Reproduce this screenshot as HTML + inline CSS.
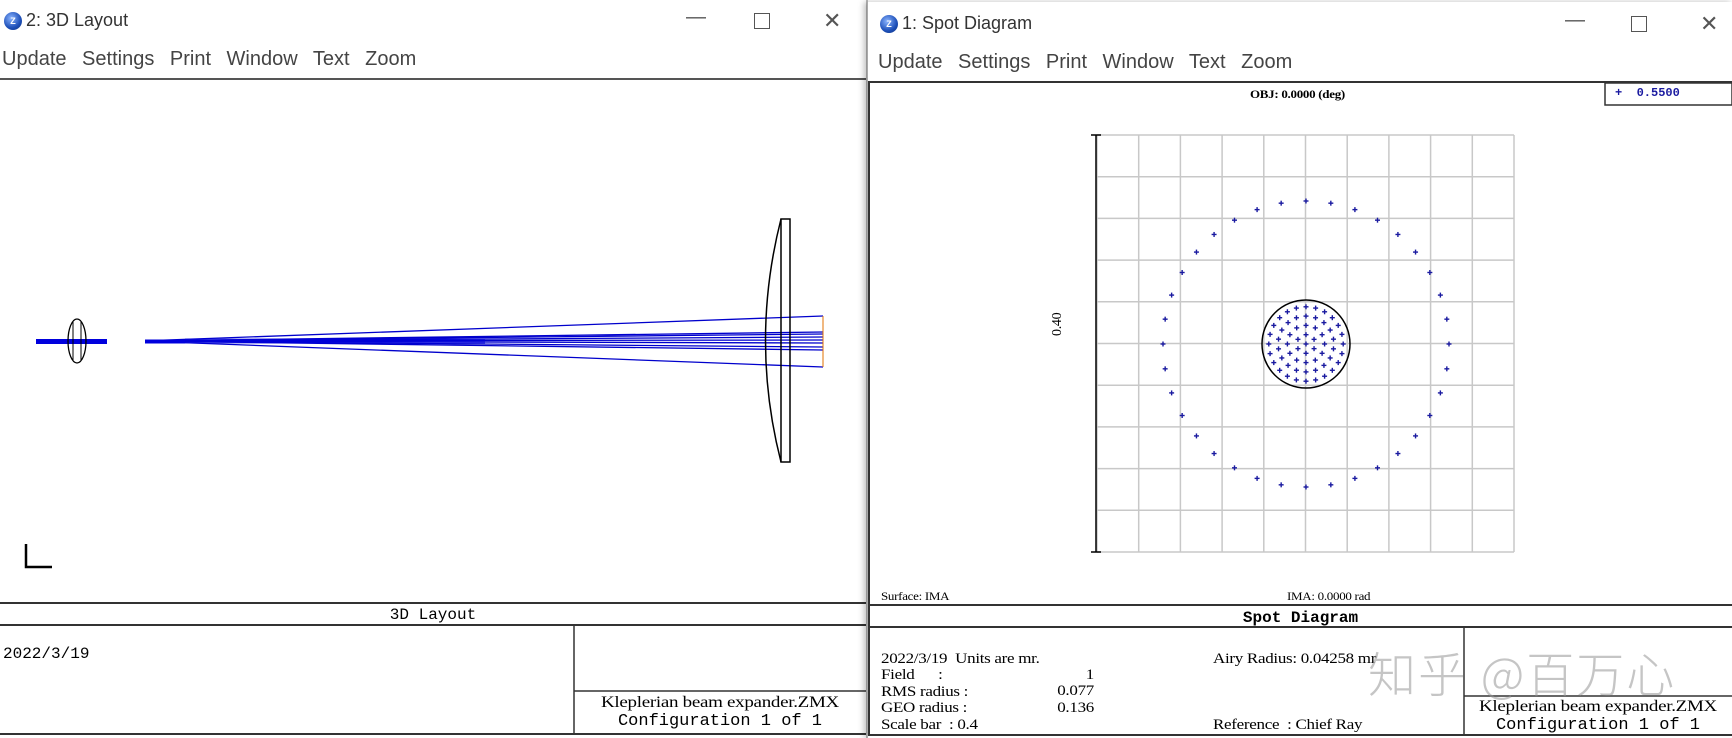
<!DOCTYPE html>
<html><head><meta charset="utf-8"><style>
body{margin:0;width:1732px;height:738px;position:relative;background:#fff;overflow:hidden;font-family:"Liberation Sans",sans-serif}
.a{position:absolute}
.title{font-size:18px;color:#333}
.menu{font-size:20px;color:#444;word-spacing:10px}
.mono{font-family:"Liberation Mono",monospace;color:#000}
.ser{font-family:"Liberation Serif",serif;color:#000;font-size:17px;letter-spacing:-0.3px;white-space:pre;line-height:19.4px;transform:scaleY(0.85);transform-origin:0 0}
.icon{width:18px;height:18px;border-radius:50%;background:radial-gradient(circle at 40% 35%,#8ab4ff,#1d4fb8 60%,#0c2f7a);color:#fff;font-size:9px;font-weight:bold;text-align:center;line-height:18px}
.ctl{font-size:20px;color:#555}
</style></head><body>
<!-- left window -->
<div class="a" style="left:0;top:0;width:866px;height:738px;background:#fff;border-right:2px solid #bbb"></div>
<div class="a icon" style="left:4px;top:12px">Z</div>
<div class="a title" style="left:26px;top:10px">2: 3D Layout</div>
<div class="a ctl" style="left:686px;top:6px">—</div>
<div class="a" style="left:754px;top:13px;width:14px;height:14px;border:1.5px solid #555"></div>
<div class="a ctl" style="left:823px;top:8px;font-size:22px">✕</div>
<div class="a menu" style="left:2px;top:48px">Update Settings Print Window Text Zoom</div>
<div class="a" style="left:0;top:78px;width:866px;height:2px;background:#555"></div>
<svg class="a" style="left:0;top:0" width="866" height="738">
<g stroke="#0000cc" stroke-width="1.3" fill="none" id="rays"></g>
<rect x="36" y="339" width="71" height="5" fill="#0000dd"/>
<rect x="145" y="339.5" width="40" height="4" fill="#0000dd"/>
<rect x="185" y="338.5" width="300" height="5" fill="#0000dd" opacity="0.6"/>
<ellipse cx="77" cy="341" rx="9" ry="22" fill="none" stroke="#000" stroke-width="1.3"/>
<line x1="73" y1="322" x2="73" y2="360" stroke="#000"/><line x1="81" y1="322" x2="81" y2="360" stroke="#000"/>
<path d="M781 219 Q750 341 781 462" fill="none" stroke="#000" stroke-width="1.5"/>
<rect x="781" y="219" width="9" height="243" fill="none" stroke="#000" stroke-width="1.5"/>
<line x1="823" y1="316" x2="823" y2="367" stroke="#e07000" stroke-width="1"/>
<path d="M26 544 V567 H52" fill="none" stroke="#000" stroke-width="2.5"/>
<line x1="0" y1="603" x2="866" y2="603" stroke="#333" stroke-width="2"/>
<line x1="0" y1="625" x2="866" y2="625" stroke="#333" stroke-width="2"/>
<line x1="574" y1="625" x2="574" y2="735" stroke="#333" stroke-width="1.5"/>
<line x1="574" y1="691" x2="866" y2="691" stroke="#333" stroke-width="1.5"/>
<line x1="0" y1="734" x2="866" y2="734" stroke="#333" stroke-width="2"/>
</svg>
<div class="a mono" style="left:0;width:866px;text-align:center;top:606px;font-size:16px">3D Layout</div>
<div class="a mono" style="left:3px;top:645px;font-size:16px">2022/3/19</div>
<div class="a ser" style="left:574px;width:292px;text-align:center;top:694px;font-size:19px">Kleplerian beam expander.ZMX</div>
<div class="a mono" style="left:574px;width:292px;text-align:center;top:712px;font-size:17px">Configuration 1 of 1</div>

<!-- right window -->
<div class="a" style="left:867px;top:2px;width:865px;height:736px;background:#fff;border-left:1px solid #aaa;box-shadow:-3px 0 6px rgba(0,0,0,.25)"></div>
<div class="a icon" style="left:880px;top:15px">Z</div>
<div class="a title" style="left:902px;top:13px">1: Spot Diagram</div>
<div class="a ctl" style="left:1565px;top:9px">—</div>
<div class="a" style="left:1631px;top:16px;width:14px;height:14px;border:1.5px solid #555"></div>
<div class="a ctl" style="left:1700px;top:11px;font-size:22px">✕</div>
<div class="a menu" style="left:878px;top:51px">Update Settings Print Window Text Zoom</div>
<svg class="a" style="left:0;top:0" width="1732" height="738">
<line x1="868" y1="82" x2="1732" y2="82" stroke="#333" stroke-width="2"/>
<line x1="869" y1="82" x2="869" y2="736" stroke="#333" stroke-width="2"/>
<rect x="1605" y="83" width="127" height="22" fill="none" stroke="#333" stroke-width="1.5"/>
<g stroke="#c8c8c8" stroke-width="1.5" id="grid"></g>
<path d="M1091 135 H1101 M1096 135 V552 M1091 552 H1101" stroke="#000" stroke-width="1.5"/>
<circle cx="1306" cy="344" r="44" fill="none" stroke="#000" stroke-width="1.5"/>
<g stroke="#1a1aa0" stroke-width="1.4" id="dots"></g>
<line x1="869" y1="605" x2="1732" y2="605" stroke="#333" stroke-width="2"/>
<line x1="869" y1="627" x2="1732" y2="627" stroke="#333" stroke-width="2"/>
<line x1="1464" y1="627" x2="1464" y2="736" stroke="#333" stroke-width="1.5"/>
<line x1="1464" y1="696" x2="1732" y2="696" stroke="#333" stroke-width="1.5"/>
<line x1="869" y1="735" x2="1732" y2="735" stroke="#333" stroke-width="2"/>
</svg>
<div class="a ser" style="left:1250px;top:86px;font-size:13px;font-weight:bold">OBJ: 0.0000 (deg)</div>
<div class="a" style="left:1615px;top:86px;font-family:'Liberation Mono',monospace;font-size:12px;color:#1a1aa0;font-weight:bold">+ &nbsp;0.5500</div>
<div class="a ser" style="left:1048px;top:336px;font-size:14px;transform:rotate(-90deg)">0.40</div>
<div class="a ser" style="left:881px;top:588px;font-size:13px">Surface: IMA</div>
<div class="a ser" style="left:1287px;top:588px;font-size:13px">IMA: 0.0000 rad</div>
<div class="a mono" style="left:869px;width:863px;text-align:center;top:609px;font-size:16px;font-weight:bold">Spot Diagram</div>
<div class="a ser" style="left:881px;top:650px">2022/3/19  Units are mr.
Field      :
RMS radius :
GEO radius :
Scale bar  : 0.4</div>
<div class="a ser" style="left:1030px;top:666px;text-align:right;width:64px">1
0.077
0.136</div>
<div class="a ser" style="left:1213px;top:650px">Airy Radius: 0.04258 mr</div>
<div class="a ser" style="left:1213px;top:716px">Reference  : Chief Ray</div>
<div class="a" style="left:1368px;top:636px;font-size:48px;letter-spacing:2px;color:rgba(150,150,150,.55);font-family:'Noto Sans CJK SC',sans-serif;font-weight:300">知乎 @百万心</div>
<div class="a ser" style="left:1464px;width:268px;text-align:center;top:698px;font-size:19px">Kleplerian beam expander.ZMX</div>
<div class="a mono" style="left:1464px;width:268px;text-align:center;top:716px;font-size:17px">Configuration 1 of 1</div>
<script>
var ns="http://www.w3.org/2000/svg";
function L(g,x1,y1,x2,y2){var l=document.createElementNS(ns,"line");l.setAttribute("x1",x1);l.setAttribute("y1",y1);l.setAttribute("x2",x2);l.setAttribute("y2",y2);g.appendChild(l);}
var r=document.getElementById("rays");
[316,332,334,337,340,343,347,350,367].forEach(function(y){L(r,160,341+(y-341)*0.03,823,y);});
var g=document.getElementById("grid");
for(var i=0;i<=10;i++){var x=1097+i*41.7;L(g,x,135,x,552);var y=135+i*41.7;L(g,1097,y,1514,y);}
var d=document.getElementById("dots");
function P(x,y){L(d,x-2.5,y,x+2.5,y);L(d,x,y-2.5,x,y+2.5);}
for(var k=0;k<36;k++){var a=k*Math.PI/18;P(1306+143*Math.cos(a),344+143*Math.sin(a));}
P(1306,344);
for(var ring=1;ring<=4;ring++){var n=6*ring,rr=ring*9.3;for(var k=0;k<n;k++){var a=k*2*Math.PI/n+Math.PI/2;P(1306+rr*Math.cos(a),344+rr*Math.sin(a));}}
</script>
</body></html>
